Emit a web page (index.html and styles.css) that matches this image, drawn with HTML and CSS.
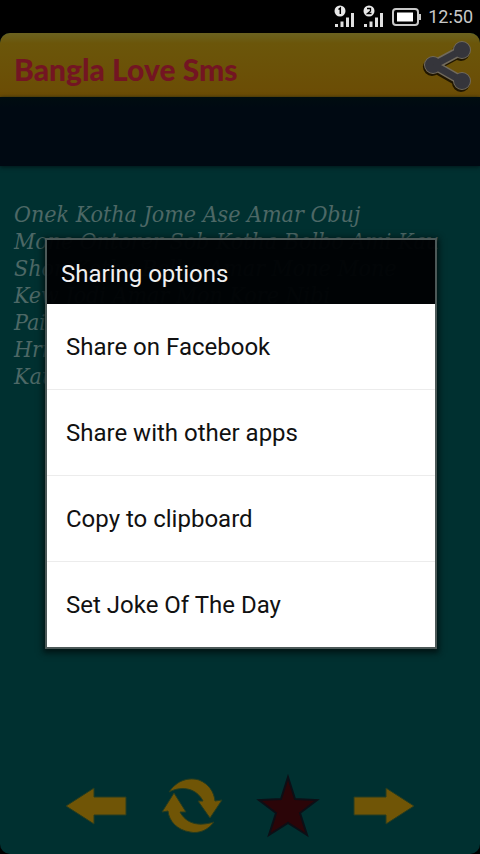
FILE: index.html
```html
<!DOCTYPE html>
<html lang="en">
<head>
<meta charset="utf-8">
<meta name="viewport" content="width=device-width, initial-scale=1">
<title>Bangla Love Sms</title>
<link rel="stylesheet" href="styles.css">
</head>
<body>
<div class="phone">
  <div class="status">
    <svg class="signal" viewBox="0 0 22 24" aria-hidden="true">
      <circle cx="6" cy="6" r="5.500" fill="#e8e8e8"/>
      <path d="M4.500 4.500 6.300 3v6" fill="none" stroke="#000" stroke-width="1.500"/>
      <path d="M1 19h3v3H1zM6.500 16.500h3V22h-3zM12 12.500h3V22h-3zM17 8h3v14h-3z" fill="#e0e0e0"/>
    </svg>
    <svg class="signal" viewBox="0 0 22 24" aria-hidden="true">
      <circle cx="6" cy="6" r="5.500" fill="#e8e8e8"/>
      <path d="M4 3.500h3.500V6L4.500 8.500H8.500" fill="none" stroke="#000" stroke-width="1.300"/>
      <path d="M1 19h3v3H1zM6.500 16.500h3V22h-3zM12 12.500h3V22h-3zM17 8h3v14h-3z" fill="#e0e0e0"/>
    </svg>
    <svg class="battery" viewBox="0 0 29 18" aria-hidden="true">
      <rect x="1" y="1" width="25" height="16" rx="3" fill="none" stroke="#c8c8c8" stroke-width="2"/>
      <rect x="5" y="4.500" width="16" height="9" fill="#fff"/>
      <path d="M26.500 6H29v6h-2.500z" fill="#c8c8c8"/>
    </svg>
    <time class="clock">12:50</time>
  </div>
  <div class="app">
    <header class="bar">
      <h1 class="brand">Bangla Love Sms</h1>
      <button class="icon share" aria-label="Share">
        <svg viewBox="0 0 52 52">
          <g fill="#201600" stroke="#201600" stroke-width="10" transform="translate(-1 2)"><path d="M40 11 12 26 40 42" fill="none"/><circle cx="40" cy="11" r="4"/><circle cx="11" cy="26" r="4"/><circle cx="40" cy="42" r="4"/></g>
          <g fill="#716a5c" stroke="#716a5c" stroke-width="10"><path d="M40 11 12 26 40 42" fill="none"/><circle cx="40" cy="11" r="4"/><circle cx="11" cy="26" r="4"/><circle cx="40" cy="42" r="4"/></g>
          <g fill="#35353b" stroke="#35353b" stroke-width="7"><path d="M40 11 12 26 40 42" fill="none"/><circle cx="40" cy="11" r="4.500"/><circle cx="11" cy="26" r="4.500"/><circle cx="40" cy="42" r="4.500"/></g>
        </svg>
      </button>
    </header>
    <div class="banner"></div>
    <main class="message">
      <p>Onek Kotha Jome Ase Amar Obuj<br>Mone Ontorer Sob Kotha Bolbo Ami Kau<br>Shon Kotha Bolbo Amar Mone Mone<br>Kew Jodi Amar Mon Kore Nibi<br>Pai<br>Hrid<br>Kau</p>
    </main>
    <nav class="tools">
      <button class="icon" aria-label="Previous">
        <svg viewBox="0 0 64 64"><path d="M2 32 30 14v9h32v18H30v9z" fill="#705506" stroke="#263c20" stroke-width="1"/></svg>
      </button>
      <button class="icon" aria-label="Refresh">
        <svg viewBox="0 0 64 64"><g fill="#705506" stroke="#263c20" stroke-width="1"><path d="M9 18C17 6 29 3 39 6C49 10 54 18 55 27L62 26 50 44 38 27 43 27C37 15 23 11 9 18z"/><path d="M54 48C48 56 39 60 30 58C17 56 9 47 8 37L2 38 14 19 26 38 20 38C26 49 37 53 54 48z"/></g></svg>
      </button>
      <button class="icon" aria-label="Favourite">
        <svg viewBox="0 0 64 64"><path d="M32 3 39 25 61 26 44 39 51 61 32 49 13 61 20 39 3 26 25 25z" fill="#2b0508" stroke="#0c0f16" stroke-width="2"/></svg>
      </button>
      <button class="icon" aria-label="Next">
        <svg viewBox="0 0 64 64"><path d="M62 32 34 14v9H2v18h32v9z" fill="#705506" stroke="#263c20" stroke-width="1"/></svg>
      </button>
    </nav>
  </div>
  <div class="overlay">
    <section class="dialog" role="dialog" aria-labelledby="dialog-title">
      <h2 class="dialog-title" id="dialog-title">Sharing options</h2>
      <ul class="options">
        <li><button class="option">Share on Facebook</button></li>
        <li><button class="option">Share with other apps</button></li>
        <li><button class="option">Copy to clipboard</button></li>
        <li><button class="option">Set Joke Of The Day</button></li>
      </ul>
    </section>
  </div>
</div>
</body>
</html>
```
FILE: styles.css
```css
* { box-sizing: border-box; }
body { margin: 0; background: #000; font-family: Roboto, "Liberation Sans", sans-serif; }
button { border: 0; padding: 0; background: none; font: inherit; color: inherit; }
svg { display: block; width: 100%; height: 100%; overflow: visible; }
.phone { position: relative; min-height: 100vh; display: flex; flex-direction: column; }
.status { height: 33px; padding: 4px 7px 4px 0; display: flex; justify-content: flex-end; align-items: center; gap: 7px; }
.signal { width: 22px; height: 24px; }
.battery { width: 29px; height: 18px; }
.clock { font-size: 18px; line-height: 24px; color: #c8c8c8; }
.app { flex: 1; display: flex; flex-direction: column; background: #003030; border-radius: 10px; overflow: hidden; }
.bar { height: 64px; padding: 0 6px 0 14px; display: flex; align-items: center; justify-content: space-between; background: linear-gradient(#6b6220, #6b560a 16%, #6b4c05); }
.brand { margin: 8px 0 0; font-family: Lato, sans-serif; font-weight: 900; font-size: 30px; line-height: 32px; color: #731522; }
.icon { width: 64px; height: 64px; }
.share { width: 52px; height: 52px; }
.banner { height: 69px; background: linear-gradient(#000d10, #000912 15%, #000912); box-shadow: 0 1px 4px #001518; }
.message { flex: 1; padding: 35px 14px; font-family: "DejaVu Serif Condensed", "DejaVu Serif", serif; font-style: italic; font-size: 23px; line-height: 27px; color: #4d6866; white-space: nowrap; }
.message p { margin: 0; }
.tools { display: flex; justify-content: center; gap: 32px; padding-bottom: 16px; }
.overlay { position: absolute; inset: 33px 0 0; display: flex; align-items: center; justify-content: center; padding: 0 43px 0 45px; }
.dialog { width: 100%; border: 2px solid #4c5958; box-shadow: 0 2px 6px 2px #001414; }
.dialog-title { margin: 0; padding: 5px 14px 0; background: rgba(0, 2, 4, 0.97); color: #f0f0f0; font-size: 24px; font-weight: 400; line-height: 59px; }
.options { margin: 0; padding: 0; list-style: none; background: #fff; }
.options li + li { border-top: 1px solid #ececec; }
.option { display: block; width: 100%; padding: 1px 19px 0; text-align: left; font-size: 24px; line-height: 84px; color: #111; }
```
